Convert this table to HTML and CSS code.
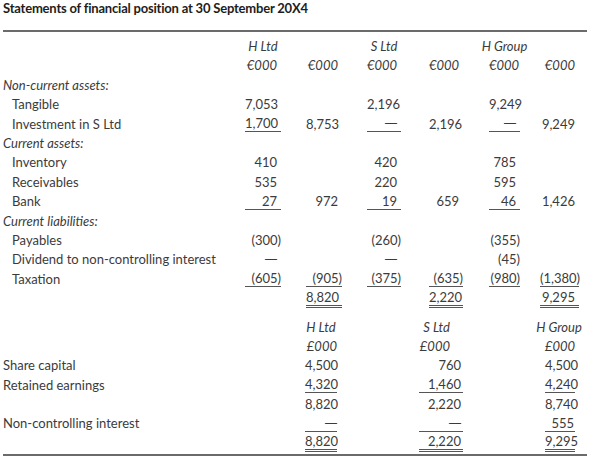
FILE: index.html
```html
<!DOCTYPE html>
<html>
<head>
<meta charset="utf-8">
<link rel="stylesheet" href="styles.css">
</head>
<body>
<div class="page">
  <h1 class="title">Statements of financial position at 30 September 20X4</h1>
  <div class="rule"></div>

  <div class="sheet upper">
    <div class="row">
      <div class="lbl"></div>
      <div class="c c1 hd"><span>H Ltd</span></div>
      <div class="c c2"></div>
      <div class="c c3 hd"><span>S Ltd</span></div>
      <div class="c c4"></div>
      <div class="c c5 hd"><span>H Group</span></div>
      <div class="c c6"></div>
    </div>
    <div class="row">
      <div class="lbl"></div>
      <div class="c c1"><span class="v it">€000</span></div>
      <div class="c c2"><span class="v it">€000</span></div>
      <div class="c c3"><span class="v it">€000</span></div>
      <div class="c c4"><span class="v it">€000</span></div>
      <div class="c c5"><span class="v it">€000</span></div>
      <div class="c c6"><span class="v it">€000</span></div>
    </div>
    <div class="row"><div class="lbl sec">Non-current assets:</div></div>
    <div class="row">
      <div class="lbl ind">Tangible</div>
      <div class="c c1"><span class="v">7,053</span></div>
      <div class="c c2"></div>
      <div class="c c3"><span class="v">2,196</span></div>
      <div class="c c4"></div>
      <div class="c c5"><span class="v">9,249</span></div>
      <div class="c c6"></div>
    </div>
    <div class="row">
      <div class="lbl ind">Investment in S Ltd</div>
      <div class="c c1"><span class="v u">1,700</span></div>
      <div class="c c2"><span class="v">8,753</span></div>
      <div class="c c3"><span class="v u dash">—</span></div>
      <div class="c c4"><span class="v">2,196</span></div>
      <div class="c c5"><span class="v u dash">—</span></div>
      <div class="c c6"><span class="v">9,249</span></div>
    </div>
    <div class="row"><div class="lbl sec">Current assets:</div></div>
    <div class="row">
      <div class="lbl ind">Inventory</div>
      <div class="c c1"><span class="v">410</span></div>
      <div class="c c2"></div>
      <div class="c c3"><span class="v">420</span></div>
      <div class="c c4"></div>
      <div class="c c5"><span class="v">785</span></div>
      <div class="c c6"></div>
    </div>
    <div class="row">
      <div class="lbl ind">Receivables</div>
      <div class="c c1"><span class="v">535</span></div>
      <div class="c c2"></div>
      <div class="c c3"><span class="v">220</span></div>
      <div class="c c4"></div>
      <div class="c c5"><span class="v">595</span></div>
      <div class="c c6"></div>
    </div>
    <div class="row">
      <div class="lbl ind">Bank</div>
      <div class="c c1"><span class="v u">27</span></div>
      <div class="c c2"><span class="v">972</span></div>
      <div class="c c3"><span class="v u">19</span></div>
      <div class="c c4"><span class="v">659</span></div>
      <div class="c c5"><span class="v u">46</span></div>
      <div class="c c6"><span class="v">1,426</span></div>
    </div>
    <div class="row"><div class="lbl sec">Current liabilities:</div></div>
    <div class="row">
      <div class="lbl ind">Payables</div>
      <div class="c c1"><span class="v neg">(300)</span></div>
      <div class="c c2"></div>
      <div class="c c3"><span class="v neg">(260)</span></div>
      <div class="c c4"></div>
      <div class="c c5"><span class="v neg">(355)</span></div>
      <div class="c c6"></div>
    </div>
    <div class="row">
      <div class="lbl ind">Dividend to non-controlling interest</div>
      <div class="c c1"><span class="v dash">—</span></div>
      <div class="c c2"></div>
      <div class="c c3"><span class="v dash">—</span></div>
      <div class="c c4"></div>
      <div class="c c5"><span class="v neg">(45)</span></div>
      <div class="c c6"></div>
    </div>
    <div class="row">
      <div class="lbl ind">Taxation</div>
      <div class="c c1"><span class="v neg u">(605)</span></div>
      <div class="c c2"><span class="v neg u">(905)</span></div>
      <div class="c c3"><span class="v neg u">(375)</span></div>
      <div class="c c4"><span class="v neg u">(635)</span></div>
      <div class="c c5"><span class="v neg u">(980)</span></div>
      <div class="c c6"><span class="v neg u">(1,380)</span></div>
    </div>
    <div class="row">
      <div class="lbl"></div>
      <div class="c c1"></div>
      <div class="c c2"><span class="v uu">8,820</span></div>
      <div class="c c3"></div>
      <div class="c c4"><span class="v uu">2,220</span></div>
      <div class="c c5"></div>
      <div class="c c6"><span class="v uu">9,295</span></div>
    </div>
  </div>

  <div class="sheet lower">
    <div class="row">
      <div class="lbl"></div>
      <div class="c d1 hd"><span>H Ltd</span></div>
      <div class="c d2 hd"><span>S Ltd</span></div>
      <div class="c d3 hd"><span>H Group</span></div>
    </div>
    <div class="row">
      <div class="lbl"></div>
      <div class="c d1"><span class="v it">£000</span></div>
      <div class="c d2"><span class="v it sh">£000</span></div>
      <div class="c d3"><span class="v it">£000</span></div>
    </div>
    <div class="row">
      <div class="lbl">Share capital</div>
      <div class="c d1"><span class="v">4,500</span></div>
      <div class="c d2"><span class="v">760</span></div>
      <div class="c d3"><span class="v">4,500</span></div>
    </div>
    <div class="row">
      <div class="lbl">Retained earnings</div>
      <div class="c d1"><span class="v u">4,320</span></div>
      <div class="c d2"><span class="v u">1,460</span></div>
      <div class="c d3"><span class="v u">4,240</span></div>
    </div>
    <div class="row">
      <div class="lbl"></div>
      <div class="c d1"><span class="v">8,820</span></div>
      <div class="c d2"><span class="v">2,220</span></div>
      <div class="c d3"><span class="v">8,740</span></div>
    </div>
    <div class="row">
      <div class="lbl">Non-controlling interest</div>
      <div class="c d1"><span class="v u dash">—</span></div>
      <div class="c d2"><span class="v u dash">—</span></div>
      <div class="c d3"><span class="v u">555</span></div>
    </div>
    <div class="row">
      <div class="lbl"></div>
      <div class="c d1"><span class="v uu">8,820</span></div>
      <div class="c d2"><span class="v uu">2,220</span></div>
      <div class="c d3"><span class="v uu">9,295</span></div>
    </div>
  </div>
  <div class="rule bottom"></div>
</div>
</body>
</html>
```

FILE: styles.css
```css
html, body {
  margin: 0;
  padding: 0;
  background: #ffffff;
}

body {
  font-family: Lato, "Open Sans", "Liberation Sans", sans-serif;
  font-size: 13px;
  color: #3b3b3b;
}

.page {
  width: 584px;
  padding-left: 3px;
}

.title {
  margin: 0;
  font-size: 13px;
  font-weight: 700;
  line-height: 16px;
  letter-spacing: -0.2px;
  color: #1d1d1d;
  white-space: nowrap;
}

.rule {
  height: 2px;
  background: #6b6b6b;
  margin-top: 14px;
}

.rule.bottom {
  margin-top: 2px;
  height: 2px;
}

.upper {
  margin-top: 4.4px;
}

.lower {
  margin-top: 9.3px;
}

.upper .row {
  display: grid;
  grid-template-columns: 242px 36px 61px 59px 62px 57px 59px;
  height: 19.4px;
  align-items: center;
}

.lower .row {
  display: grid;
  grid-template-columns: 302px 32px 126px 112px;
  height: 19.33px;
  align-items: center;
}

.lbl {
  white-space: nowrap;
  line-height: 16px;
}

.lbl.sec {
  font-style: italic;
}

.lbl.ind {
  padding-left: 9px;
}

.c {
  display: flex;
  justify-content: flex-end;
  align-items: center;
}

.c.hd {
  font-style: italic;
  white-space: nowrap;
}

.c.hd span {
  display: flex;
  justify-content: center;
  line-height: 16px;
}

.v {
  display: block;
  box-sizing: border-box;
  text-align: right;
  line-height: 16px;
  padding-right: 4px;
  white-space: nowrap;
}

.v.dash {
  font-family: "Liberation Sans", sans-serif;
  font-size: 12px;
}

.v.neg {
  padding-right: 0;
}

.v.it {
  font-style: italic;
}

.v.u {
  border-bottom: 1px solid #555555;
}

.v.uu {
  border-bottom: 3px double #555555;
}

/* upper column widths (underline widths) */
.c1 .v, .c1.hd span { width: 36px; }
.c2 .v { width: 36px; }
.c3 .v, .c3.hd span { width: 34px; }
.c4 .v { width: 34px; }
.c5 .v, .c5.hd span { width: 31px; }
.c6 .v { width: 39px; }

/* lower columns */
.d1 .v, .d1.hd span { width: 32px; padding-right: 0; }
.d2 .v { width: 44px; padding-right: 2px; }
.d3 .v, .d3.hd span { width: 30px; padding-right: 1px; }

.d2 .v.sh { padding-right: 13px; }

.d2.hd span {
  width: 44px;
  padding-right: 13px;
  justify-content: flex-end;
}
```
